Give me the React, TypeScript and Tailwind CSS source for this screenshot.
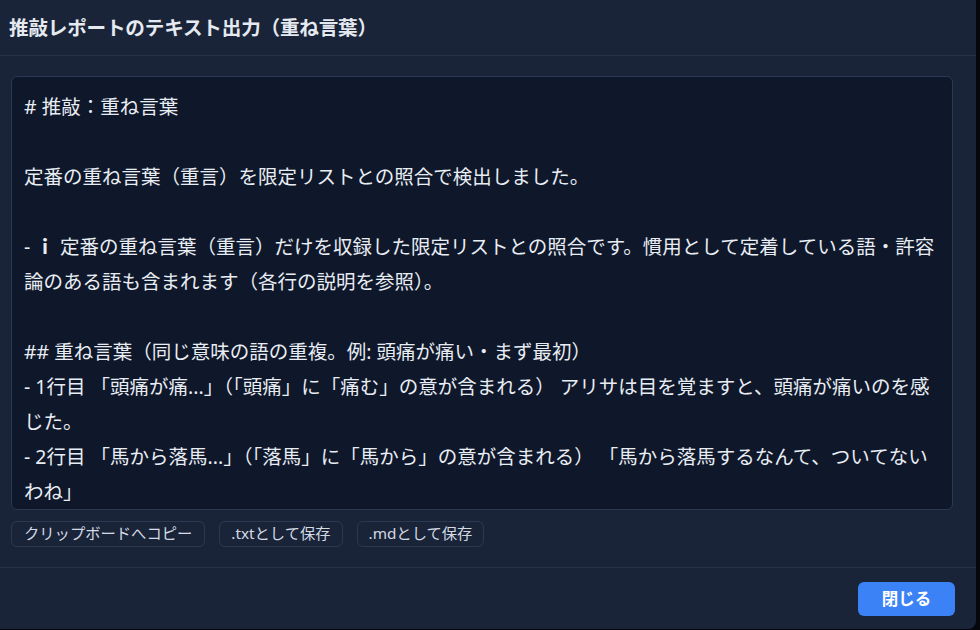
import React from "react";

const lines: React.ReactNode[] = [
  "# 推敲：重ね言葉",
  "",
  "定番の重ね言葉（重言）を限定リストとの照合で検出しました。",
  "",
  <>
    - <span className="font-bold">ｉ</span> 定番の重ね言葉（重言）だけを収録した限定リストとの照合です。慣用として定着している語・許容
  </>,
  "論のある語も含まれます（各行の説明を参照）。",
  "",
  "## 重ね言葉（同じ意味の語の重複。例: 頭痛が痛い・まず最初）",
  "- 1行目 「頭痛が痛...」（「頭痛」に「痛む」の意が含まれる） アリサは目を覚ますと、頭痛が痛いのを感",
  "じた。",
  "- 2行目 「馬から落馬...」（「落馬」に「馬から」の意が含まれる） 「馬から落馬するなんて、ついてない",
  "わね」",
];

export default function App() {
  return (
    <div
      className="w-[980px] h-[630px] bg-[#05070c] overflow-hidden"
      style={{ fontFamily: '"Noto Sans", "Noto Sans CJK JP", sans-serif' }}
    >
      <div className="w-[976px] h-[629px] bg-[#1a2439] rounded-br-lg flex flex-col">
        <div className="h-[56px] border-b border-[#263049] flex items-center pl-[9px]">
          <h2 className="text-[19.6px] font-bold text-[#e5e9f0] tracking-[-0.2px]">
            推敲レポートのテキスト出力（重ね言葉）
          </h2>
        </div>
        <div className="flex-1 flex flex-col px-[11px] pt-[20px] pb-[20px] border-b border-[#263049]">
          <div className="w-[942px] h-[434px] bg-[#0f172a] border border-[#2c3852] rounded-md pl-[12px] pt-[12px] overflow-hidden">
            {lines.map((l, i) => (
              <div
                key={i}
                className="h-[35px] leading-[35px] text-[19.5px] text-[#e8edf3] whitespace-nowrap"
              >
                {l === "" ? "\u00a0" : l}
              </div>
            ))}
          </div>
          <div className="flex gap-[14px] mt-[11px]">
            <button className="h-[26px] px-[12px] rounded-md border border-[#2c3852] text-[15.3px] text-[#d4dae3] leading-none">
              クリップボードへコピー
            </button>
            <button className="h-[26px] px-[11px] rounded-md border border-[#2c3852] text-[15.3px] text-[#d4dae3] leading-none">
              .txtとして保存
            </button>
            <button className="h-[26px] px-[11px] rounded-md border border-[#2c3852] text-[15.3px] text-[#d4dae3] leading-none">
              .mdとして保存
            </button>
          </div>
        </div>
        <div className="h-[61px] flex justify-end items-start pt-[14px] pr-[21px]">
          <button className="w-[97px] h-[34px] rounded-md bg-[#3b82f6] text-white font-bold text-[16.5px]">
            閉じる
          </button>
        </div>
      </div>
    </div>
  );
}
